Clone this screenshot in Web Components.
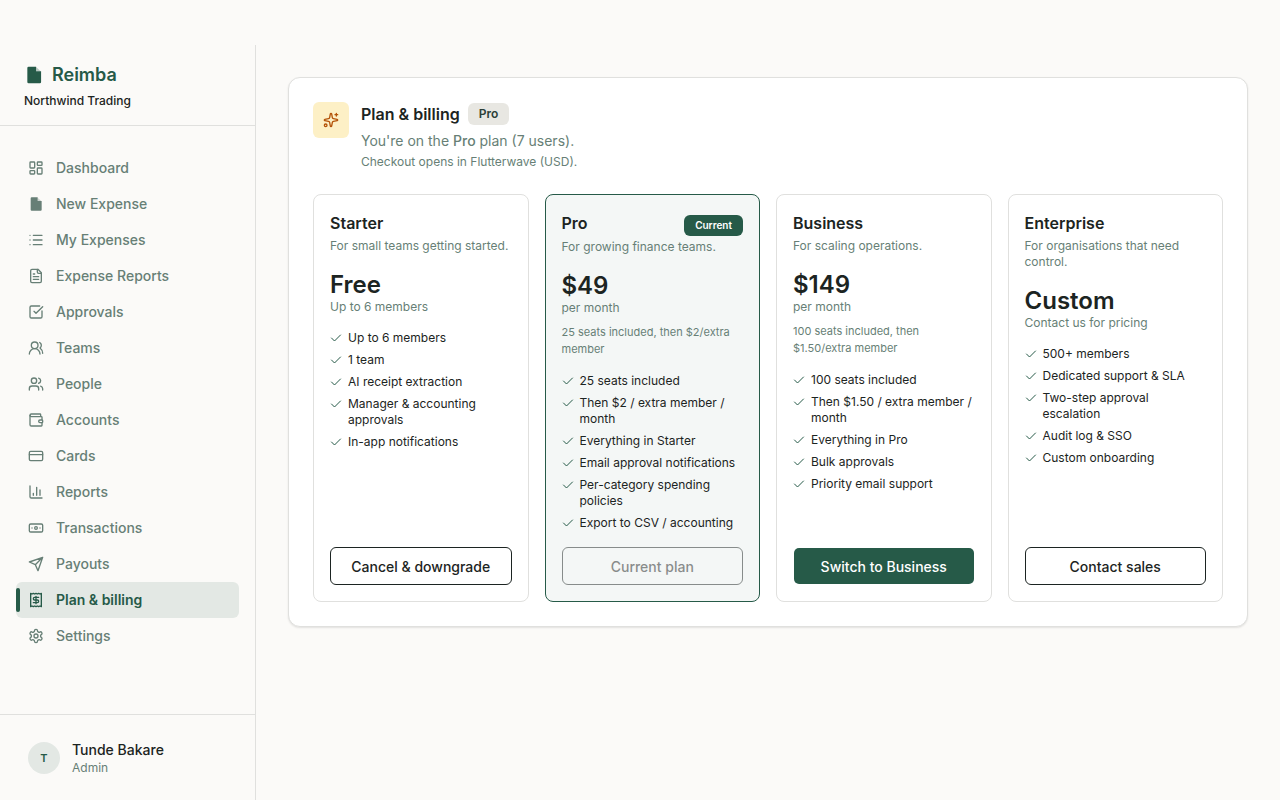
<!DOCTYPE html>
<html lang="en">
<head>
<meta charset="UTF-8">
<meta name="viewport" content="width=device-width, initial-scale=1">
<title>Reimba - Plan &amp; billing</title>
<style>
  :root {
    --bg: #fbfaf8;
    --ink: #1c2422;
    --muted: #677f76;
    --green: #265a48;
    --green-soft: #e3e8e4;
    --line: #e0e0de;
  }
  * { box-sizing: border-box; }
  body {
    margin: 0;
    background: var(--bg);
    color: var(--ink);
    font-family: Inter, "Liberation Sans", sans-serif;
    font-size: 14px;
  }
</style>
</head>
<body>
<app-shell>
  <side-bar slot="sidebar" company="Northwind Trading">
    <nav-item icon="dashboard">Dashboard</nav-item>
    <nav-item icon="file">New Expense</nav-item>
    <nav-item icon="list">My Expenses</nav-item>
    <nav-item icon="fileText">Expense Reports</nav-item>
    <nav-item icon="check">Approvals</nav-item>
    <nav-item icon="teams">Teams</nav-item>
    <nav-item icon="people">People</nav-item>
    <nav-item icon="wallet">Accounts</nav-item>
    <nav-item icon="card">Cards</nav-item>
    <nav-item icon="chart">Reports</nav-item>
    <nav-item icon="banknote">Transactions</nav-item>
    <nav-item icon="send">Payouts</nav-item>
    <nav-item icon="receipt" active>Plan &amp; billing</nav-item>
    <nav-item icon="settings">Settings</nav-item>
    <user-chip slot="footer" name="Tunde Bakare" role-name="Admin"></user-chip>
  </side-bar>
  <billing-panel></billing-panel>
</app-shell>

<script>
const ICONS = {
  dashboard: `<rect x="3" y="3" width="7" height="9" rx="1"/><rect x="14" y="3" width="7" height="5" rx="1"/><rect x="14" y="12" width="7" height="9" rx="1"/><rect x="3" y="16" width="7" height="5" rx="1"/>`,
  file: `<path d="M5.500 2h9v5.500h6V20.500a1.500 1.500 0 0 1-1.500 1.500h-13.500a1.500 1.500 0 0 1-1.500-1.500v-17a1.500 1.500 0 0 1 1.500-1.500z" fill="currentColor" stroke="none"/><path d="M14.500 2.500 20 7.500h-5.500z" fill="currentColor" stroke="none" opacity="0.300"/>`,
  list: `<path d="M3 5h.01M3 12h.01M3 19h.01M8 5h13M8 12h13M8 19h13"/>`,
  fileText: `<path d="M15 2H6a2 2 0 0 0-2 2v16a2 2 0 0 0 2 2h12a2 2 0 0 0 2-2V7Z"/><path d="M14 2v4a2 2 0 0 0 2 2h4M10 9H8M16 13H8M16 17H8"/>`,
  check: `<path d="M21 10.5V19a2 2 0 0 1-2 2H5a2 2 0 0 1-2-2V5a2 2 0 0 1 2-2h12.5"/><path d="m9 11 3 3L22 4"/>`,
  teams: `<path d="M18 21a8 8 0 0 0-16 0"/><circle cx="10" cy="8" r="5"/><path d="M22 20c0-3.37-2-6.5-4-8a5 5 0 0 0-.45-8.3"/>`,
  people: `<path d="M16 21v-2a4 4 0 0 0-4-4H6a4 4 0 0 0-4 4v2"/><circle cx="9" cy="7" r="4"/><path d="M22 21v-2a4 4 0 0 0-3-3.87M16 3.13a4 4 0 0 1 0 7.75"/>`,
  wallet: `<path d="M19 7V4a1 1 0 0 0-1-1H5a2 2 0 0 0 0 4h15a1 1 0 0 1 1 1v4h-3a2 2 0 0 0 0 4h3a1 1 0 0 0 1-1v-2a1 1 0 0 0-1-1"/><path d="M3 5v14a2 2 0 0 0 2 2h15a1 1 0 0 0 1-1v-4"/>`,
  card: `<rect x="2" y="5" width="20" height="14" rx="2"/><path d="M2 10h20"/>`,
  chart: `<path d="M3 3v16a2 2 0 0 0 2 2h16M18 17V9M13 17V5M8 17v-3"/>`,
  banknote: `<rect x="2" y="6" width="20" height="12" rx="2"/><circle cx="12" cy="12" r="2"/><path d="M6 12h.01M18 12h.01"/>`,
  send: `<path d="M22 2 15 22 11 13 2 9ZM22 2 11 13"/>`,
  receipt: `<path d="M4 2v20l2-1 2 1 2-1 2 1 2-1 2 1 2-1 2 1V2l-2 1-2-1-2 1-2-1-2 1-2-1-2 1Z"/><path d="M16 8h-6a2 2 0 1 0 0 4h4a2 2 0 1 1 0 4H8M12 17.5v-11"/>`,
  settings: `<path d="M12.22 2h-.44a2 2 0 0 0-2 2v.18a2 2 0 0 1-1 1.73l-.43.25a2 2 0 0 1-2 0l-.15-.08a2 2 0 0 0-2.73.73l-.22.38a2 2 0 0 0 .73 2.73l.15.1a2 2 0 0 1 1 1.72v.51a2 2 0 0 1-1 1.74l-.15.09a2 2 0 0 0-.73 2.73l.22.38a2 2 0 0 0 2.73.73l.15-.08a2 2 0 0 1 2 0l.43.25a2 2 0 0 1 1 1.73V20a2 2 0 0 0 2 2h.44a2 2 0 0 0 2-2v-.18a2 2 0 0 1 1-1.73l.43-.25a2 2 0 0 1 2 0l.15.08a2 2 0 0 0 2.73-.73l.22-.39a2 2 0 0 0-.73-2.73l-.15-.08a2 2 0 0 1-1-1.74v-.5a2 2 0 0 1 1-1.74l.15-.09a2 2 0 0 0 .73-2.73l-.22-.38a2 2 0 0 0-2.73-.73l-.15.08a2 2 0 0 1-2 0l-.43-.25a2 2 0 0 1-1-1.73V4a2 2 0 0 0-2-2z"/><circle cx="12" cy="12" r="3"/>`,
  sparkles: `<path d="M11.017 2.814a1 1 0 0 1 1.966 0l1.051 5.558a2 2 0 0 0 1.594 1.594l5.558 1.051a1 1 0 0 1 0 1.966l-5.558 1.051a2 2 0 0 0-1.594 1.594l-1.051 5.558a1 1 0 0 1-1.966 0l-1.051-5.558a2 2 0 0 0-1.594-1.594l-5.558-1.051a1 1 0 0 1 0-1.966l5.558-1.051a2 2 0 0 0 1.594-1.594z"/><path d="M20 2v4M22 4h-4"/><circle cx="4" cy="20" r="2"/>`,
  tick: `<path d="M21 6 9 18l-6-6"/>`,
};

class UiIcon extends HTMLElement {
  constructor() {
    super();
    this.attachShadow({ mode: "open" });
  }

  connectedCallback() {
    const size = this.getAttribute("size") || 16;
    const stroke = this.getAttribute("stroke") || 2;
    this.shadowRoot.innerHTML = `
      <style>
        :host { display: inline-flex; flex: none; }
        svg { display: block; }
      </style>
      <svg width="${size}" height="${size}" viewBox="0 0 24 24" fill="none" stroke="currentColor"
        stroke-width="${stroke}" stroke-linecap="round" stroke-linejoin="round" aria-hidden="true">${ICONS[this.getAttribute("name")]}</svg>
    `;
  }
}

class AppShell extends HTMLElement {
  constructor() {
    super();
    this.attachShadow({ mode: "open" });
    this.shadowRoot.innerHTML = `
      <style>
        :host {
          display: flex;
          box-sizing: border-box;
          min-height: 100vh;
          padding-top: 45px;
        }
        main {
          flex: 1;
          min-width: 0;
          padding: 32px;
        }
      </style>
      <slot name="sidebar"></slot>
      <main><slot></slot></main>
    `;
  }
}

class SideBar extends HTMLElement {
  constructor() {
    super();
    this.attachShadow({ mode: "open" });
  }

  connectedCallback() {
    this.shadowRoot.innerHTML = `
      <style>
        :host {
          display: flex;
          flex-direction: column;
          box-sizing: border-box;
          width: 256px;
          flex: none;
          border-right: 1px solid var(--line);
        }
        header {
          padding: 16px 24px;
          border-bottom: 1px solid var(--line);
        }
        .brand {
          display: flex;
          align-items: center;
          gap: 8px;
          color: var(--green);
          font-size: 18px;
          line-height: 28px;
          font-weight: 600;
          text-decoration: none;
        }
        .company {
          margin: 4px 0 0;
          font-size: 12px;
          line-height: 16px;
          font-weight: 500;
        }
        nav {
          flex: 1;
          padding: 24px 16px;
        }
        footer {
          padding: 24px 28px;
          border-top: 1px solid var(--line);
        }
      </style>
      <header>
        <a class="brand" href="#"><ui-icon name="file" size="20"></ui-icon>Reimba</a>
        <p class="company">${this.getAttribute("company")}</p>
      </header>
      <nav><slot></slot></nav>
      <footer><slot name="footer"></slot></footer>
    `;
  }
}

class NavItem extends HTMLElement {
  constructor() {
    super();
    this.attachShadow({ mode: "open" });
  }

  connectedCallback() {
    this.shadowRoot.innerHTML = `
      <style>
        :host { display: block; }
        a {
          display: flex;
          align-items: center;
          gap: 12px;
          height: 36px;
          padding: 0 12px;
          box-sizing: border-box;
          position: relative;
          border-radius: 6px;
          color: var(--muted);
          font-size: 14px;
          line-height: 20px;
          font-weight: 500;
          text-decoration: none;
        }
        :host([active]) a {
          background: var(--green-soft);
          color: var(--green);
          font-weight: 600;
        }
        :host([active]) a::before {
          content: "";
          position: absolute;
          left: 0;
          top: 6px;
          bottom: 6px;
          width: 4px;
          border-radius: 2px;
          background: var(--green);
        }
      </style>
      <a href="#" ${this.hasAttribute("active") ? 'aria-current="page"' : ""}>
        <ui-icon name="${this.getAttribute("icon")}"></ui-icon><span><slot></slot></span>
      </a>
    `;
  }
}

class UserChip extends HTMLElement {
  constructor() {
    super();
    this.attachShadow({ mode: "open" });
  }

  connectedCallback() {
    const name = this.getAttribute("name");
    this.shadowRoot.innerHTML = `
      <style>
        :host {
          display: flex;
          align-items: center;
          gap: 12px;
        }
        .avatar {
          display: grid;
          place-items: center;
          width: 32px;
          height: 32px;
          border-radius: 50%;
          background: var(--green-soft);
          color: var(--green);
          font-size: 11px;
          font-weight: 600;
        }
        p { margin: 0; }
        .name {
          font-size: 14px;
          line-height: 21px;
          font-weight: 500;
        }
        .role {
          color: var(--muted);
          font-size: 12px;
          line-height: 16px;
        }
      </style>
      <div class="avatar">${name[0]}</div>
      <div>
        <p class="name">${name}</p>
        <p class="role">${this.getAttribute("role-name")}</p>
      </div>
    `;
  }
}

class PlanCard extends HTMLElement {
  constructor() {
    super();
    this.attachShadow({ mode: "open" });
  }

  set plan(plan) {
    this._plan = plan;
    this.render();
  }

  render() {
    const p = this._plan;
    this.toggleAttribute("current", !!p.current);
    this.shadowRoot.innerHTML = `
      <style>
        :host {
          display: flex;
          flex-direction: column;
          box-sizing: border-box;
          min-width: 0;
          padding: 16px;
          border: 1px solid var(--line);
          border-radius: 8px;
        }
        :host([current]) {
          border-color: var(--green);
          background: #f4f7f6;
        }
        .top {
          display: flex;
          justify-content: space-between;
          align-items: flex-start;
        }
        h3 {
          margin: 0;
          font-size: 16px;
          line-height: 24px;
          font-weight: 600;
        }
        .badge {
          margin-top: 4px;
          padding: 0 11px;
          border-radius: 6px;
          background: var(--green);
          color: #fff;
          font-size: 10px;
          line-height: 21px;
          font-weight: 600;
        }
        p { margin: 0; }
        .desc, .period {
          color: var(--muted);
          font-size: 12px;
          line-height: 16px;
        }
        .desc { margin-top: 3px; }
        .price {
          margin-top: 16px;
          font-size: 24px;
          line-height: 29px;
          font-weight: 600;
        }
        .seats {
          margin-top: 8px;
          color: var(--muted);
          font-size: 11px;
          line-height: 17px;
        }
        ul {
          display: flex;
          flex: 1;
          flex-direction: column;
          gap: 6px;
          margin: 15px 0 16px;
          padding: 0;
          list-style: none;
        }
        li {
          display: flex;
          gap: 6px;
          font-size: 12px;
          line-height: 16px;
        }
        li ui-icon {
          margin-top: 2px;
          color: var(--green);
        }
        button {
          height: 38px;
          padding: 0 12px;
          border: 1px solid var(--ink);
          border-radius: 6px;
          background: #fff;
          color: var(--ink);
          font: inherit;
          font-size: 14px;
          font-weight: 500;
          cursor: pointer;
        }
        button.primary {
          border-color: transparent;
          background: var(--green);
          background-clip: padding-box;
          color: #fff;
        }
        button:disabled {
          background: transparent;
          opacity: 0.5;
          cursor: default;
        }
      </style>
      <div class="top">
        <h3>${p.name}</h3>
        ${p.current ? '<span class="badge">Current</span>' : ""}
      </div>
      <p class="desc">${p.desc}</p>
      <p class="price">${p.price}</p>
      <p class="period">${p.period}</p>
      ${p.seats ? `<p class="seats">${p.seats}</p>` : ""}
      <ul>
        ${p.features.map((f) => `<li><ui-icon name="tick" size="12"></ui-icon><span>${f}</span></li>`).join("")}
      </ul>
      <button type="button" class="${p.primary ? "primary" : ""}" ${p.current ? "disabled" : ""}>${p.action}</button>
    `;
  }
}

const PLANS = [
  {
    name: "Starter",
    desc: "For small teams getting started.",
    price: "Free",
    period: "Up to 6 members",
    features: ["Up to 6 members", "1 team", "AI receipt extraction", "Manager &amp; accounting approvals", "In-app notifications"],
    action: "Cancel &amp; downgrade",
  },
  {
    name: "Pro",
    desc: "For growing finance teams.",
    price: "$49",
    period: "per month",
    seats: "25 seats included, then $2/extra member",
    features: ["25 seats included", "Then $2 / extra member / month", "Everything in Starter", "Email approval notifications", "Per-category spending policies", "Export to CSV / accounting"],
    action: "Current plan",
    current: true,
  },
  {
    name: "Business",
    desc: "For scaling operations.",
    price: "$149",
    period: "per month",
    seats: "100 seats included, then $1.50/extra member",
    features: ["100 seats included", "Then $1.50 / extra member / month", "Everything in Pro", "Bulk approvals", "Priority email support"],
    action: "Switch to Business",
    primary: true,
  },
  {
    name: "Enterprise",
    desc: "For organisations that need control.",
    price: "Custom",
    period: "Contact us for pricing",
    features: ["500+ members", "Dedicated support &amp; SLA", "Two-step approval escalation", "Audit log &amp; SSO", "Custom onboarding"],
    action: "Contact sales",
  },
];

class BillingPanel extends HTMLElement {
  constructor() {
    super();
    this.attachShadow({ mode: "open" });
  }

  connectedCallback() {
    this.shadowRoot.innerHTML = `
      <style>
        :host {
          display: block;
          box-sizing: border-box;
          padding: 24px;
          border: 1px solid var(--line);
          border-radius: 12px;
          background: #fff;
          box-shadow: 0 1px 2px rgba(0, 0, 0, 0.1);
        }
        header {
          display: flex;
          gap: 12px;
        }
        .mark {
          display: grid;
          place-items: center;
          flex: none;
          width: 36px;
          height: 36px;
          border-radius: 6px;
          background: #fdf0c6;
          color: #b45309;
        }
        .title {
          display: flex;
          align-items: center;
          gap: 8px;
        }
        h2 {
          margin: 0;
          font-size: 16px;
          line-height: 24px;
          font-weight: 600;
        }
        .tag {
          padding: 0 11px;
          border-radius: 6px;
          background: #e8e7e2;
          font-size: 12px;
          line-height: 22px;
          font-weight: 600;
          color: #2c4038;
        }
        p {
          margin: 0;
          color: var(--muted);
        }
        .lead {
          margin-top: 4px;
          font-size: 14px;
          line-height: 22px;
        }
        .lead strong { font-weight: 500; }
        .hint {
          margin-top: 2px;
          font-size: 12px;
          line-height: 16px;
        }
        .plans {
          display: grid;
          grid-template-columns: repeat(4, minmax(0, 1fr));
          gap: 16px;
          margin-top: 24px;
        }
      </style>
      <header>
        <div class="mark"><ui-icon name="sparkles"></ui-icon></div>
        <div>
          <div class="title"><h2>Plan &amp; billing</h2><span class="tag">Pro</span></div>
          <p class="lead">You're on the <strong>Pro</strong> plan (7 users).</p>
          <p class="hint">Checkout opens in Flutterwave (USD).</p>
        </div>
      </header>
      <div class="plans"></div>
    `;

    const plans = this.shadowRoot.querySelector(".plans");
    PLANS.forEach((plan) => {
      const card = document.createElement("plan-card");
      card.plan = plan;
      plans.append(card);
    });
  }
}

customElements.define("ui-icon", UiIcon);
customElements.define("app-shell", AppShell);
customElements.define("nav-item", NavItem);
customElements.define("user-chip", UserChip);
customElements.define("side-bar", SideBar);
customElements.define("plan-card", PlanCard);
customElements.define("billing-panel", BillingPanel);
</script>
</body>
</html>
